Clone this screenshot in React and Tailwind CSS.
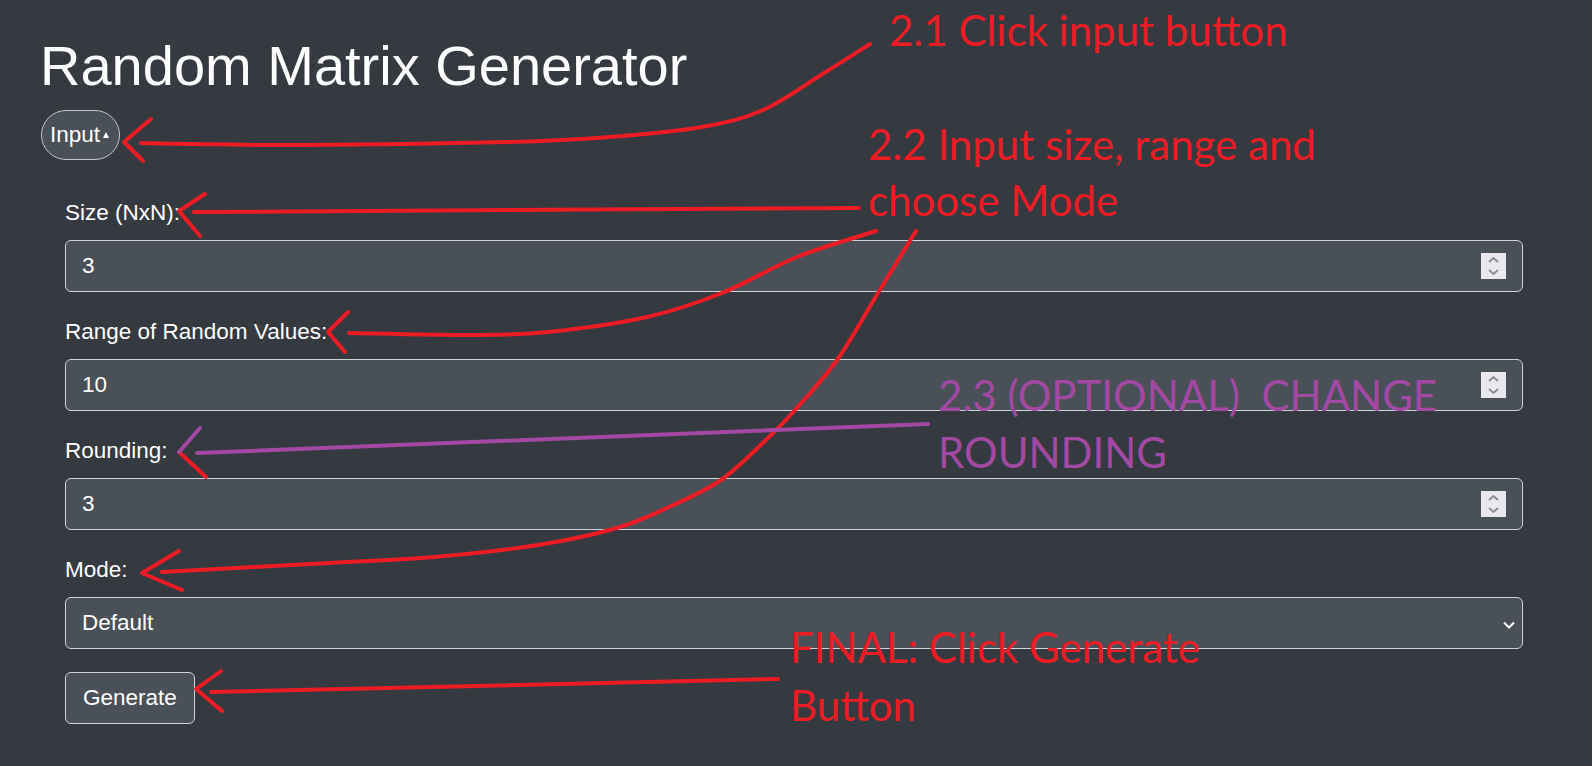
import React from "react";

// catmull-rom -> bezier so the hand-drawn arrows come out smooth
const smooth = (pts) => {
  let d = `M${pts[0][0]} ${pts[0][1]}`;
  for (let i = 0; i < pts.length - 1; i++) {
    const p0 = pts[i - 1] || pts[i];
    const p1 = pts[i];
    const p2 = pts[i + 1];
    const p3 = pts[i + 2] || p2;
    const c1 = [p1[0] + (p2[0] - p0[0]) / 6, p1[1] + (p2[1] - p0[1]) / 6];
    const c2 = [p2[0] - (p3[0] - p1[0]) / 6, p2[1] - (p3[1] - p1[1]) / 6];
    d += ` C${c1[0]} ${c1[1]} ${c2[0]} ${c2[1]} ${p2[0]} ${p2[1]}`;
  }
  return d;
};

const RED = "#ed1c24";
const PURPLE = "#a349a4";

const Spinner = () => (
  <div className="absolute right-[17px] top-[13px] w-[25px] h-[26px] bg-[#e9e9ed] flex flex-col items-center justify-center gap-[6px]">
    <svg width="11" height="6" viewBox="0 0 11 6" fill="none">
      <path d="M1 5 L5.5 1 L10 5" stroke="#8a8a96" strokeWidth="1.8" />
    </svg>
    <svg width="11" height="6" viewBox="0 0 11 6" fill="none">
      <path d="M1 1 L5.5 5 L10 1" stroke="#8a8a96" strokeWidth="1.8" />
    </svg>
  </div>
);

const NumberField = ({ label, value }) => (
  <div className="flex flex-col gap-[11px]">
    <label className="text-[22.5px] leading-[33px]">{label}</label>
    <div className="relative">
      <input
        type="text"
        defaultValue={value}
        className="w-full h-[52px] px-[16px] bg-[#495057] text-white text-[22.5px] border border-[#ced4da] rounded-[6px] outline-none"
      />
      <Spinner />
    </div>
  </div>
);

export default function App() {
  return (
    <div className="relative min-h-screen h-[766px] overflow-hidden bg-[#343a40] text-white font-['Liberation_Sans',Arial,sans-serif]">
      <div className="flex flex-col items-start pl-[40px] pr-[44px] pt-[33px]">
        <h1 className="text-[56px] leading-[66px] mb-[11px]">Random Matrix Generator</h1>
        <button className="ml-[1px] inline-flex items-center h-[50px] pl-[8px] pr-[10px] bg-[#495057] border border-[#c4c8cc] rounded-full text-[22.5px] text-white">
          Input
          <span className="ml-[3px] mb-[1px] w-0 h-0 border-l-[3.5px] border-r-[3.5px] border-b-[6px] border-l-transparent border-r-transparent border-b-white" />
        </button>

        <div className="self-stretch flex flex-col items-start gap-[23px] px-[25px] pt-[36px]">
          <div className="self-stretch flex flex-col gap-[23px]">
            <NumberField label="Size (NxN):" value="3" />
            <NumberField label="Range of Random Values:" value="10" />
            <NumberField label="Rounding:" value="3" />

            <div className="flex flex-col gap-[11px]">
              <label className="text-[22.5px] leading-[33px]">Mode:</label>
              <div className="relative">
                <select className="w-full h-[52px] pl-[16px] bg-[#495057] text-white text-[22.5px] border border-[#ced4da] rounded-[6px] appearance-none outline-none">
                  <option>Default</option>
                </select>
                <svg
                  className="absolute right-[8px] top-[24px] pointer-events-none"
                  width="12"
                  height="8"
                  viewBox="0 0 12 8"
                  fill="none"
                >
                  <path d="M1 1.5 L6 6.5 L11 1.5" stroke="white" strokeWidth="2" />
                </svg>
              </div>
            </div>
          </div>

          <button className="h-[52px] px-[17px] bg-[#495057] border border-[#ced4da] rounded-[6px] text-[22.5px] text-white">
            Generate
          </button>
        </div>
      </div>

      {/* annotation layer */}
      <svg
        className="absolute inset-0 pointer-events-none"
        width="1592"
        height="766"
        viewBox="0 0 1592 766"
        fill="none"
        strokeLinecap="round"
        strokeLinejoin="round"
      >
        <g stroke={RED} strokeWidth="4">
          <path d={smooth([[870, 44], [824, 73], [763, 110], [702, 127], [610, 137], [508, 142], [304, 145], [192, 144], [141, 143]])} />
          <path d="M151 119 L124 142 L143 161" />

          <path d="M859 208 L194 212" />
          <path d="M205 194 L179 211 L200 236" />

          <path d={smooth([[876, 231], [797, 257], [722, 293], [647, 317], [548, 332], [473, 335], [349, 333]])} />
          <path d="M348 312 L328 332 L345 352" />

          <path d={smooth([[916, 231], [878, 293], [837, 360], [795, 410], [769, 437], [721, 480], [669, 507], [617, 528], [538, 545], [434, 557], [329, 563], [162, 572]])} />
          <path d="M179 551 L142 573 L182 590" />

          <path d="M778 679 L211 692" />
          <path d="M221 671 L196 689 L222 711" />

          <path d="M179 452 L206 477" />
        </g>
        <g stroke={PURPLE} strokeWidth="4">
          <path d="M928 424 L197 453" />
          <path d="M200 428 L179 452" />
        </g>
      </svg>

      <div className="absolute left-[889px] top-[9px] whitespace-pre font-['Lato',sans-serif] text-[42px] leading-none text-[#ed1c24]">
        2.1 Click input button
      </div>
      <div className="absolute left-[868px] top-[116px] whitespace-pre font-['Lato',sans-serif] text-[42px] leading-[56px] text-[#ed1c24]">
        {"2.2 Input size, range and\nchoose Mode"}
      </div>
      <div className="absolute left-[938px] top-[367px] whitespace-pre font-['Lato',sans-serif] text-[42px] leading-[57px] text-[#a349a4]">
        {"2.3 (OPTIONAL)  CHANGE\nROUNDING"}
      </div>
      <div className="absolute left-[790px] top-[618px] whitespace-pre font-['Lato',sans-serif] text-[42px] leading-[58px] text-[#ed1c24]">
        {"FINAL: Click Generate\nButton"}
      </div>
    </div>
  );
}
